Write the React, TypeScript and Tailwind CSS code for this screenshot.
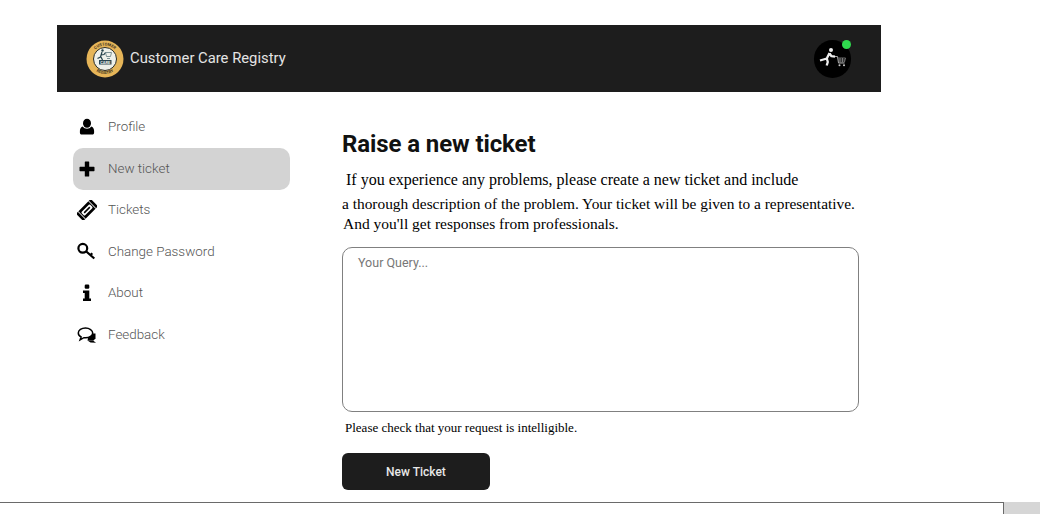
const UserIcon = () => (
  <svg width="20" height="20" viewBox="0 0 20 20" fill="#000">
    <ellipse cx="10" cy="6.200" rx="4" ry="4.500" />
    <path d="M5.800 9.500c1 1.500 2.500 2.200 4.200 2.200s3.200-.7 4.200-2.200c1.800.5 2.800 2 2.900 4.200v2c0 1-.7 1.800-1.800 1.800H4.700c-1.100 0-1.800-.8-1.800-1.800v-2c.1-2.200 1.100-3.700 2.900-4.200z" />
  </svg>
);

const PlusIcon = () => (
  <svg width="20" height="20" viewBox="0 0 20 20" fill="#000">
    <path d="M8.400 2.500h3.200a.6.6 0 0 1 .6.600v4.700h4.700a.6.600 0 0 1 .6.600v3.200a.6.600 0 0 1-.6.600h-4.700v4.700a.6.600 0 0 1-.6.600H8.400a.6.600 0 0 1-.6-.6v-4.700H3.100a.6.600 0 0 1-.6-.6V8.400a.6.600 0 0 1 .6-.6h4.700V3.100a.6.600 0 0 1 .6-.6z" />
  </svg>
);

const TicketIcon = () => (
  <svg width="20" height="20" viewBox="0 0 20 20">
    <g transform="rotate(-45 10 10)">
      <rect x="-0.500" y="4.800" width="21" height="10.400" rx="1.500" fill="#000" />
      <rect x="4" y="7.600" width="12" height="4.800" rx="1" fill="#fff" />
      <rect x="6" y="9.200" width="8" height="1.600" fill="#000" />
      <rect x="2.200" y="4.800" width="0.800" height="10.400" fill="#fff" />
      <rect x="17" y="4.800" width="0.800" height="10.400" fill="#fff" />
    </g>
  </svg>
);

const KeyIcon = () => (
  <svg width="20" height="20" viewBox="0 0 20 20" fill="none" stroke="#000">
    <circle cx="5.800" cy="6.300" r="4.400" strokeWidth="2.200" />
    <path d="M9.300 9.500l8 7M13.500 13l1.800-1.800" strokeWidth="2.200" />
  </svg>
);

const InfoIcon = () => (
  <svg width="20" height="20" viewBox="0 0 20 20" fill="#000">
    <rect x="7.700" y="1.500" width="4.600" height="4.200" rx="1.200" />
    <path d="M6 7.500h6.300v8h1.700v2.500H6v-2.500h1.700v-5.500H6z" />
  </svg>
);

const CommentsIcon = () => (
  <svg width="20" height="20" viewBox="0 0 20 20">
    <path d="M16 15.500l3 2.300-5.500-.3-3-2z" fill="#000" />
    <path d="M12 8.500h6.500v5l-2 2h-6z" fill="#000" />
    <path d="M8.500 3C4.500 3 1.300 5.200 1.300 8c0 1.700 1.100 3.100 2.800 4l-1 2.800 3.800-2.100c.5.100 1 .1 1.600.1 4 0 7.200-2.200 7.200-4.800S12.500 3 8.500 3z" fill="#fff" stroke="#000" strokeWidth="1.500" />
  </svg>
);

const navItems = [
  { label: "Profile", icon: <UserIcon /> },
  { label: "New ticket", icon: <PlusIcon />, active: true },
  { label: "Tickets", icon: <TicketIcon /> },
  { label: "Change Password", icon: <KeyIcon /> },
  { label: "About", icon: <InfoIcon /> },
  { label: "Feedback", icon: <CommentsIcon /> },
];

function Logo() {
  return (
    <svg width="38" height="38" viewBox="0 0 38 38" className="shrink-0">
      <defs>
        <path id="logoTop" d="M5.500 19a13.500 13.500 0 0 1 27 0" />
        <path id="logoBottom" d="M4 19a15 15 0 0 0 30 0" />
      </defs>
      <circle cx="19" cy="19" r="18.500" fill="#e6b558" />
      <circle cx="19" cy="19" r="11.500" fill="#eef0ea" stroke="#2b2b22" strokeWidth="1" />
      <text fontSize="4" fontWeight="700" fill="#3d3320" fontFamily="Roboto, sans-serif">
        <textPath href="#logoTop" startOffset="50%" textAnchor="middle">CUSTOMER</textPath>
      </text>
      <text fontSize="4" fontWeight="700" fill="#3d3320" fontFamily="Roboto, sans-serif">
        <textPath href="#logoBottom" startOffset="50%" textAnchor="middle">REGISTRY</textPath>
      </text>
      <circle cx="16.500" cy="10.500" r="1.200" fill="#24404a" />
      <path d="M16 12l-1.500 5-3 1.500M15 15l3-.5 1.500-2M15 17l1.500 3" fill="none" stroke="#24404a" strokeWidth="1.200" />
      <path d="M19.500 12.500h6l-1 4h-4zM21 18.500h3" fill="none" stroke="#5f7a80" strokeWidth="0.800" />
      <rect x="13" y="20" width="12.500" height="4.500" fill="#2a4650" />
      <text x="19.200" y="23.700" textAnchor="middle" fontSize="4" fontWeight="700" fill="#eef0ea" fontFamily="Roboto, sans-serif">CARE</text>
    </svg>
  );
}

function Avatar() {
  return (
    <div className="relative w-[37px] h-[38px] rounded-full bg-black">
      <svg width="37" height="38" viewBox="0 0 37 38">
        <circle cx="17" cy="10" r="2" fill="#eee" />
        <path d="M15.500 13l-2.700 5.500-6.800 2M15.500 13.500l2 2.700 3.500.5M12.800 18.500l1 3.500-1.100 3.500" fill="none" stroke="#eee" strokeWidth="2.300" strokeLinejoin="round" />
        <path d="M21 16.500h2.500l1 6.500h6" fill="none" stroke="#aaa" strokeWidth="1" />
        <path d="M23.500 18h8l-1 4h-6.500M24 20h7M26 18v4M28.500 18v4" fill="none" stroke="#999" strokeWidth="0.700" />
        <circle cx="25.500" cy="25.300" r="1" fill="#ccc" />
        <circle cx="30" cy="25.300" r="1" fill="#ccc" />
      </svg>
      <span className="absolute top-0 right-0 w-[9px] h-[9px] rounded-full bg-[#2fdc4e]" />
    </div>
  );
}

export default function App() {
  return (
    <div className="h-[514px] overflow-hidden bg-white flex flex-col font-['Roboto',sans-serif]">
      <header className="ml-[57px] mt-[25px] w-[824px] h-[67px] shrink-0 bg-[#1d1d1d] flex items-center justify-between pl-[29px] pr-[30px]">
        <div className="flex items-center gap-[6px]">
          <Logo />
          <span className="text-[14.800px] text-[#e4e4e4]">Customer Care Registry</span>
        </div>
        <Avatar />
      </header>

      <div className="flex flex-1 min-h-0 ml-[73px]">
        <nav className="w-[217px] pt-[14.500px] shrink-0">
          {navItems.map((item) => (
            <div
              key={item.label}
              className={`h-[41.500px] flex items-center rounded-[10px] ${item.active ? "bg-[#d3d3d3]" : ""}`}
            >
              <span className="w-[35px] flex justify-center ml-[-4px] mr-[4px]">{item.icon}</span>
              <span className="text-[13.400px] font-light text-[#555]">{item.label}</span>
            </div>
          ))}
        </nav>

        <main className="ml-[52px] w-[520px] pt-[38px]">
          <h1 className="text-[24px] leading-[28px] font-bold tracking-[-0.1px] text-[#111]">Raise a new ticket</h1>
          <div className="mt-[12px] font-['Liberation_Serif',serif] text-black">
            <p className="pl-[4px] text-[16px] leading-[20px]">If you experience any problems, please create a new ticket and include</p>
            <p className="mt-[1px] text-[15.400px] leading-[25px] whitespace-nowrap">a thorough description of the problem. Your ticket will be given to a representative.</p>
            <p className="pl-[1px] text-[15.500px] leading-[15px]">And you'll get responses from professionals.</p>
          </div>
          <textarea
            placeholder="Your Query..."
            className="block mt-[16px] w-[517px] h-[165px] resize-none rounded-[10px] border border-[#808080] px-[15px] py-[6px] text-[12.500px] font-['Roboto',sans-serif] placeholder:text-[#777] outline-none"
          />
          <p className="mt-[7px] pl-[3px] font-['Liberation_Serif',serif] text-[13px] leading-[18px] text-black">
            Please check that your request is intelligible.
          </p>
          <button className="mt-[16px] block w-[148px] h-[37px] rounded-[6px] bg-[#1d1d1d] text-[12px] font-medium text-[#e8e8e8]">
            New Ticket
          </button>
        </main>
      </div>

      <div className="h-[12px] shrink-0 flex">
        <div className="w-[1004px] border-t border-r border-[#6a6a6a]" />
        <div className="flex-1 bg-[#d6d6d6]" />
      </div>
    </div>
  );
}
